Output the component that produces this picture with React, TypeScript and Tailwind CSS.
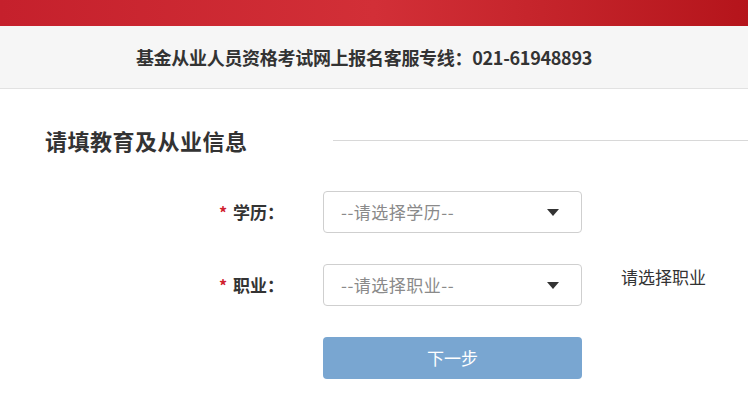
const font = { fontFamily: '"Noto Sans CJK SC", "Noto Sans", sans-serif' };

function Caret() {
  return (
    <svg width="12" height="7" viewBox="0 0 12 7" className="shrink-0">
      <path d="M0 0 L12 0 L6 7 Z" fill="#333" />
    </svg>
  );
}

function SelectBox({ placeholder }: { placeholder: string }) {
  return (
    <div className="flex h-[42px] w-[259px] items-center justify-between rounded-[4px] border border-[#cfcfcf] bg-white pl-[17px] pr-[22px]">
      <span className="text-[17px] tracking-[0.5px] text-[#8a8a8a]">{placeholder}</span>
      <Caret />
    </div>
  );
}

function FieldRow({ label, placeholder, hint }: { label: string; placeholder: string; hint?: string }) {
  return (
    <div className="flex items-center">
      <div className="flex w-[284px] items-center justify-end">
        <span className="mr-[6px] text-[16px] font-bold text-[#d0202e]">*</span>
        <span className="text-[17px] font-bold text-[#333]">{label}：</span>
      </div>
      <div className="ml-[39px]">
        <SelectBox placeholder={placeholder} />
      </div>
      {hint && <span className="ml-[39px] -mt-[16px] text-[17px] text-[#333]">{hint}</span>}
    </div>
  );
}

export default function App() {
  return (
    <div className="min-h-[397px] w-full bg-white" style={font}>
      <div className="h-[26px] bg-gradient-to-r from-[#c5202c] via-[#d22f37] to-[#b5141b]" />
      <div className="flex h-[63px] items-center justify-center border-b border-[#e2e2e2] bg-[#f6f6f6] pr-[20px]">
        <span className="text-[18px] font-bold tracking-[-0.3px] text-[#333]">基金从业人员资格考试网上报名客服专线：021-61948893</span>
      </div>

      <div className="mt-[34px] flex items-center">
        <h2 className="ml-[45px] text-[22px] font-bold leading-[34px] tracking-[0.5px] text-[#333]">请填教育及从业信息</h2>
        <div className="ml-[85px] h-px flex-1 bg-[#d8d8d8]" />
      </div>

      <div className="mt-[34px] flex flex-col gap-[31px]">
        <FieldRow label="学历" placeholder="--请选择学历--" />
        <FieldRow label="职业" placeholder="--请选择职业--" hint="请选择职业" />
        <div className="ml-[323px]">
          <button className="h-[42px] w-[259px] rounded-[4px] bg-[#79a6d1] text-[17px] text-white">下一步</button>
        </div>
      </div>
    </div>
  );
}
